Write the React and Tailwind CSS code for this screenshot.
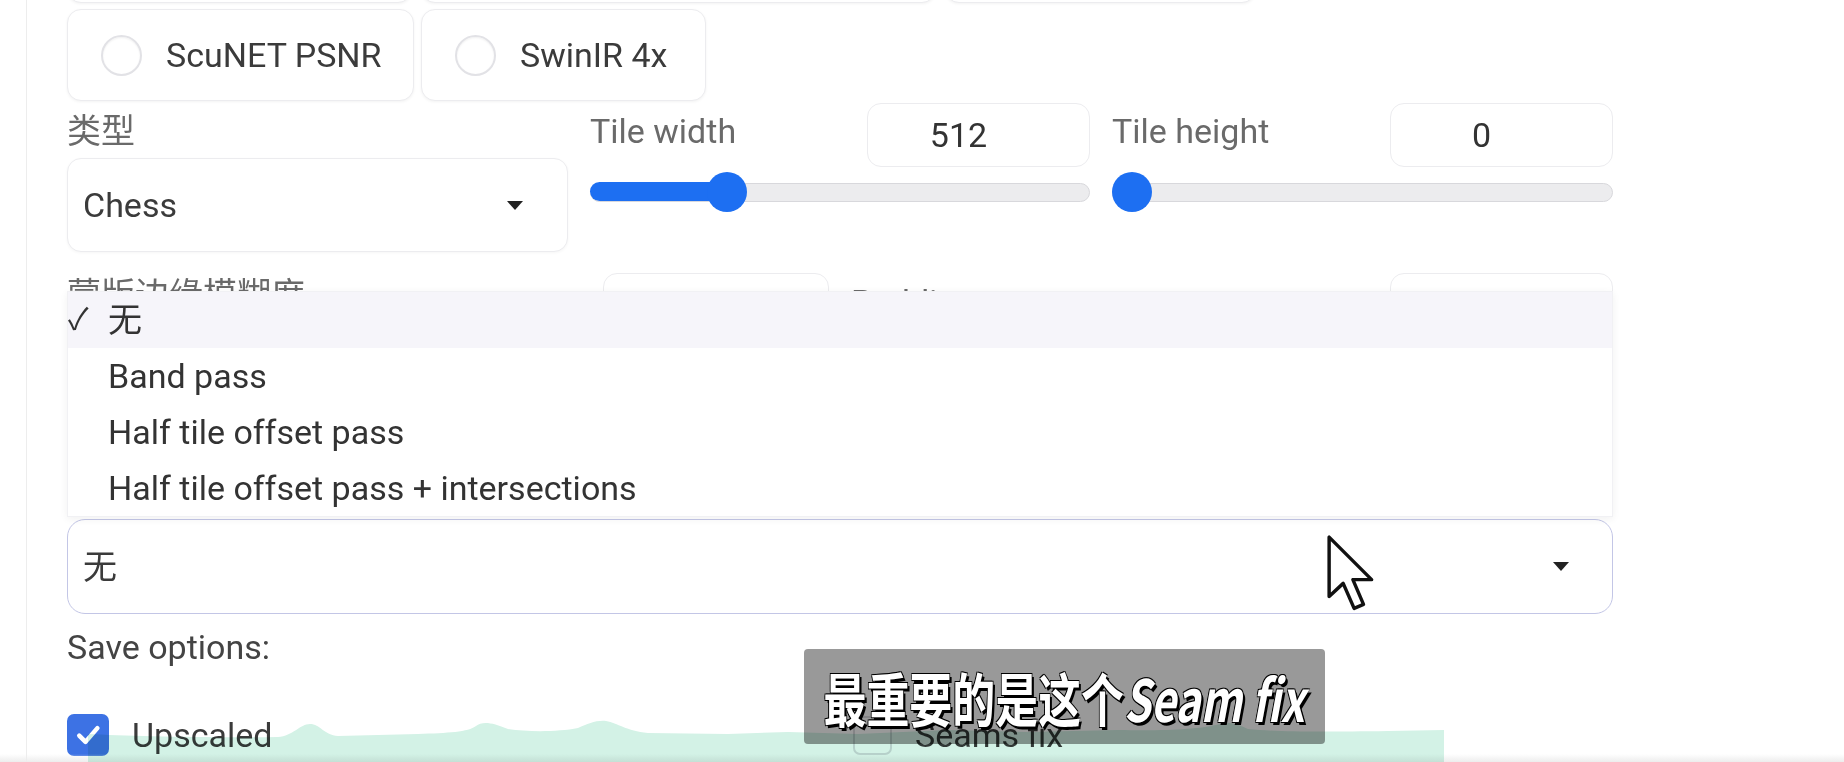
import React from 'react';

const CaretDown = () => (
  <svg width="16" height="9" viewBox="0 0 16 9" className="shrink-0">
    <path d="M0 0 L16 0 L8 9 Z" fill="#222" />
  </svg>
);

const RadioBox = ({ label, width }) => (
  <div className={`flex h-[92px] items-center gap-[24px] rounded-[14px] border border-[#ececef] bg-white pl-[33px] shadow-[0_1px_3px_rgba(0,0,0,0.05)] ${width}`}>
    <span className="h-[41px] w-[41px] shrink-0 rounded-full border-2 border-[#e2e2e6] bg-white shadow-[inset_0_1px_2px_rgba(0,0,0,0.06)]" />
    <span className="whitespace-nowrap text-[#3b3b3b]">{label}</span>
  </div>
);

const NumberBox = ({ value, width = 'w-[223px]' }) => (
  <div className={`flex h-[64px] items-center justify-center rounded-[14px] border border-[#ececef] bg-white pr-[40px] text-[#333] ${width}`}>
    {value}
  </div>
);

const Slider = ({ percent }) => (
  <div className="relative flex h-[40px] items-center">
    <div className="h-[19px] w-full rounded-full border border-[#d8d8dc] bg-[#ececee]" />
    <div className="absolute left-0 top-[10px] h-[19px] rounded-full bg-[#1d6ff2]" style={{ width: `${percent}%` }} />
    <div className="absolute top-0 h-[40px] w-[40px] -translate-x-1/2 rounded-full bg-[#1d6ff2]" style={{ left: `calc(${percent}% + ${percent === 0 ? 20 : 0}px)` }} />
  </div>
);

const menuItems = ['无', 'Band pass', 'Half tile offset pass', 'Half tile offset pass + intersections'];

const App = () => {
  return (
    <div className="relative h-[762px] w-[1844px] overflow-hidden bg-white font-['Roboto','Noto_Sans_CJK_SC',sans-serif] text-[34px] leading-[40px] text-[#3b3b3b]">
      {/* waveform strip along the bottom edge */}
      <svg className="absolute bottom-0 left-[88px] z-20 mix-blend-multiply" width="1356" height="42" viewBox="0 0 1356 42">
        <path
          d="M0 14 C40 16 120 18 190 17 C205 16 212 4 222 4 C232 4 236 15 250 16 L330 14 C360 13 380 12 388 6 C394 1 404 2 420 9 C440 12 470 12 490 8 C500 4 508 0 518 1 C530 3 538 11 560 13 L640 14 L700 12 L770 14 L860 10 L940 12 L1030 10 C1080 11 1110 9 1128 5 C1140 1 1148 3 1160 9 C1190 12 1230 12 1300 11 L1356 10 L1356 42 L0 42 Z"
          fill="#d3f2e6"
        />
      </svg>

      <div className="ml-[26px] flow-root h-full w-[1588px] border-l border-[#ededed] pl-[40px]">
        <div className="w-[1546px]">
          {/* previous radio row, cut by the top edge */}
          <div className="-mt-[89px] flex gap-[9px]">
            <RadioBox label="R-ESRGAN 4x+" width="w-[345px]" />
            <RadioBox label="R-ESRGAN 4x+ Anime6B" width="w-[515px]" />
            <RadioBox label="ScuNET GAN" width="w-[311px]" />
          </div>

          <div className="mt-[6px] flex gap-[7px]">
            <RadioBox label="ScuNET PSNR" width="w-[347px]" />
            <RadioBox label="SwinIR 4x" width="w-[285px]" />
          </div>

          <div className="mt-[10px] grid grid-cols-[501px_500px_501px] gap-x-[22px]">
            <div>
              <div className="text-[#6a6a6a]">类型</div>
              <div className="mt-[7px] flex h-[94px] items-center justify-between rounded-[14px] border border-[#ececef] bg-white pl-[15px] pr-[44px] shadow-[0_1px_3px_rgba(0,0,0,0.04)]">
                <span>Chess</span>
                <CaretDown />
              </div>
            </div>
            <div>
              <div className="flex items-start justify-between">
                <span className="text-[#6a6a6a]">Tile width</span>
                <div className="-mt-[8px]">
                  <NumberBox value="512" />
                </div>
              </div>
              <div className="mt-[5px]">
                <Slider percent={27.4} />
              </div>
            </div>
            <div>
              <div className="flex items-start justify-between">
                <span className="text-[#6a6a6a]">Tile height</span>
                <div className="-mt-[8px]">
                  <NumberBox value="0" />
                </div>
              </div>
              <div className="mt-[5px]">
                <Slider percent={0} />
              </div>
            </div>
          </div>

          {/* row hidden behind the open menu */}
          <div className="mt-[21px] grid grid-cols-2 gap-x-[22px]">
            <div>
              <div className="flex items-start justify-between">
                <span className="mt-[2px] text-[#6a6a6a]">蒙版边缘模糊度</span>
                <NumberBox value="8" width="w-[226px]" />
              </div>
              <div className="mt-[13px]">
                <Slider percent={12} />
              </div>
            </div>
            <div>
              <div className="flex items-start justify-between">
                <span className="mt-[9px] text-[#6a6a6a]">Padding</span>
                <NumberBox value="32" />
              </div>
              <div className="mt-[13px]">
                <Slider percent={25} />
              </div>
            </div>
          </div>

          <div className="mt-[88px] text-[#6a6a6a]">接缝修复类型</div>
          <div className="relative mt-[1px]">
            <div className="absolute bottom-full left-0 right-0 z-10 mb-[2px] border border-[#f1f1f4] bg-white shadow-[0_2px_8px_rgba(0,0,0,0.06)]">
              {menuItems.map((item, i) => (
                <div key={item} className={`flex h-[56px] items-center ${i === 0 ? 'bg-[#f6f5fa]' : 'bg-white'}`}>
                  <span className="w-[40px] shrink-0 text-[30px] text-[#333]">{i === 0 ? '✓' : ''}</span>
                  <span className="whitespace-nowrap text-[#333]">{item}</span>
                </div>
              ))}
            </div>
            <div className="flex h-[95px] items-center justify-between rounded-[18px] border-[1.5px] border-[#c3c6e6] bg-white pl-[15px] pr-[43px]">
              <span>无</span>
              <CaretDown />
            </div>
          </div>

          <div className="mt-[13px] text-[#444]">Save options:</div>
          <div className="mt-[47px] grid grid-cols-2 gap-x-[22px]">
            <div className="flex items-center gap-[23px]">
              <span className="flex h-[42px] w-[42px] items-center justify-center rounded-[7px] bg-[#3d72e4]">
                <svg width="30" height="30" viewBox="0 0 24 24">
                  <path d="M5 12.5 L10 17.5 L19.5 6.5" fill="none" stroke="#fff" strokeWidth="3.6" strokeLinecap="round" strokeLinejoin="round" />
                </svg>
              </span>
              <span>Upscaled</span>
            </div>
            <div className="flex items-center gap-[23px] pl-[2px]">
              <span className="h-[39px] w-[39px] rounded-[7px] border-2 border-[#dcdce0] bg-white" />
              <span>Seams fix</span>
            </div>
          </div>
        </div>
      </div>

      <div className="absolute bottom-0 left-0 h-[8px] w-full bg-gradient-to-b from-transparent to-[#ededed]" />

      {/* subtitle overlay */}
      <div className="absolute left-[804px] top-[649px] flex h-[95px] w-[521px] items-center justify-center rounded-[4px] bg-black/40">
        <div className="scale-x-[0.74] whitespace-nowrap font-['Noto_Sans_CJK_SC',sans-serif] text-[58px] font-bold leading-[60px] text-white [text-shadow:3px_3px_0_#000,-1px_-1px_0_#000,1px_-1px_0_#000,-1px_1px_0_#000]">
          最重要的是这个<span className="font-semibold italic">Seam fix</span>
        </div>
      </div>

      {/* mouse pointer */}
      <svg className="absolute left-[1326px] top-[534px] z-30" width="50" height="80" viewBox="0 0 16 25.6">
        <path d="M1 1 L1 20 L5.5 15.8 L9 23.8 L12 22.5 L8.6 14.6 L14.6 14.6 Z" fill="#fff" stroke="#111" strokeWidth="1.1" strokeLinejoin="round" />
      </svg>
    </div>
  );
};

export default App;
